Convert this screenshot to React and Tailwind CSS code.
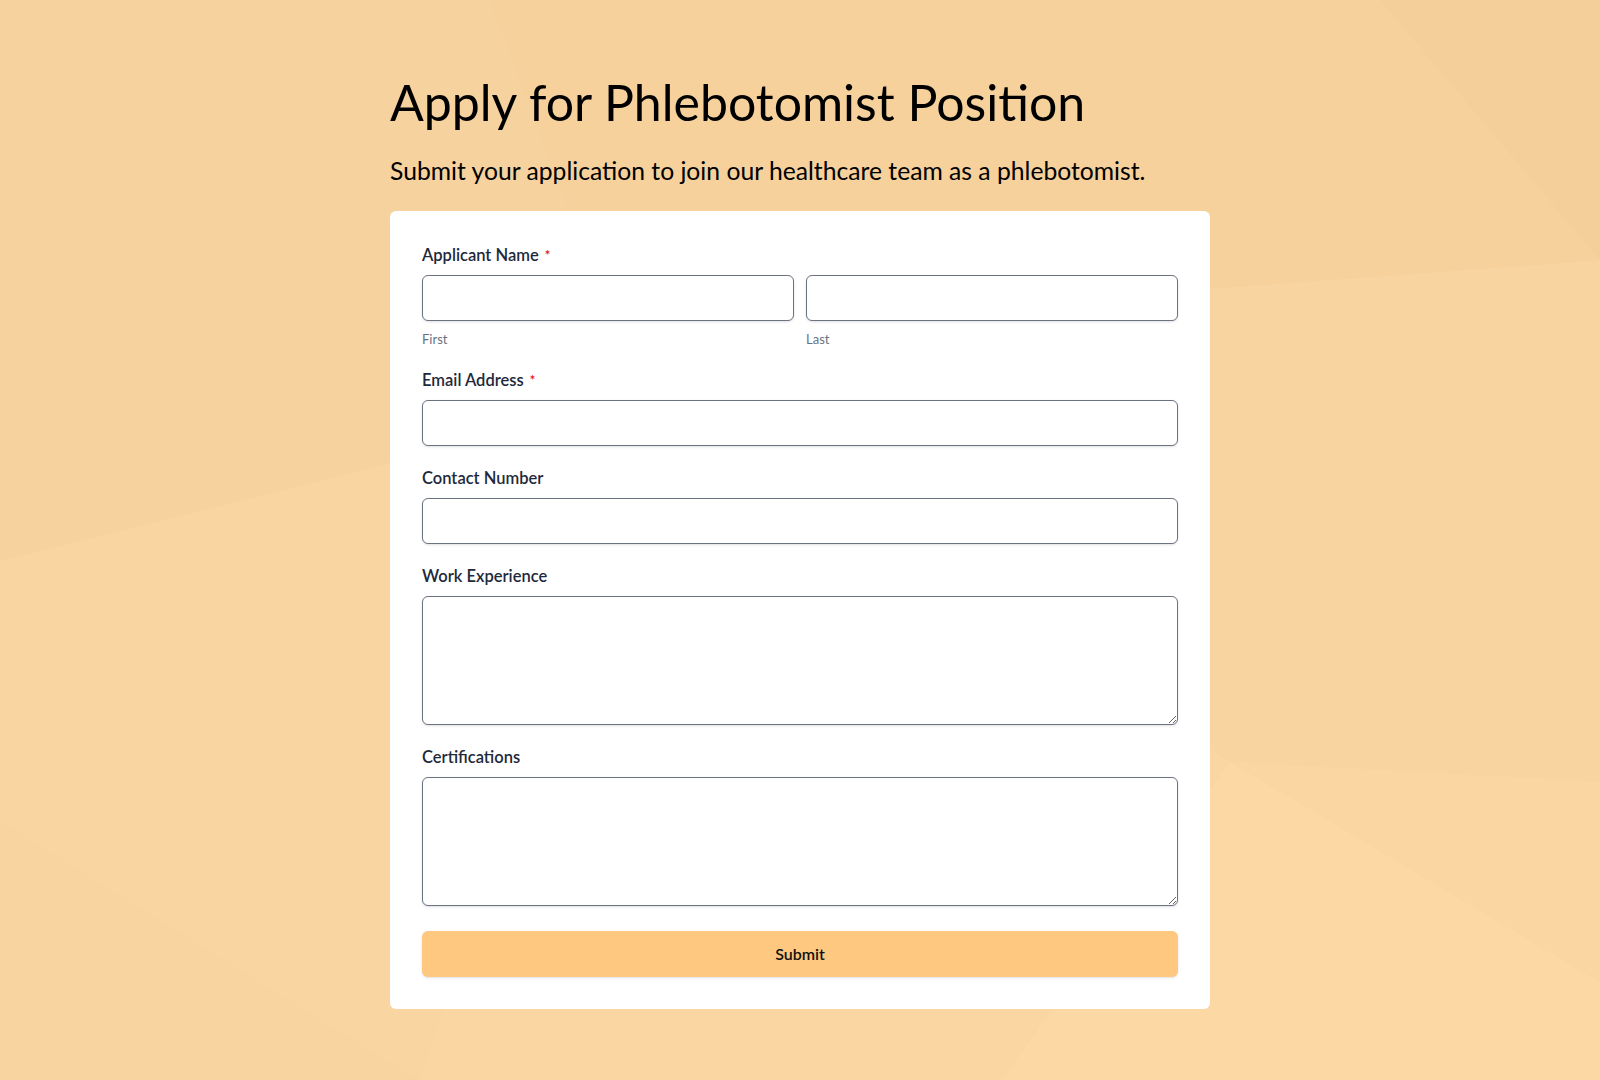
import { useState } from 'react'

function Label({ children, required }) {
  return (
    <label className="flex items-center text-[16.5px] font-semibold leading-6 text-[#1e293b] mb-2">
      {children}
      {required && <span className="ml-1.5 text-[13px] leading-none text-red-600">*</span>}
    </label>
  )
}

const inputCls =
  'block w-full h-[46px] px-3 rounded-md border border-[#6b7280] bg-white text-base text-slate-800 shadow-sm outline-none focus:border-amber-500'

const areaCls =
  'block w-full h-[129px] px-3 py-2 rounded-md border border-[#6b7280] bg-white text-base text-slate-800 shadow-sm outline-none focus:border-amber-500'

function Backdrop() {
  return (
    <svg
      className="absolute inset-0 w-full h-full"
      viewBox="0 0 1600 1080"
      preserveAspectRatio="none"
    >
      <polygon points="0,0 490,0 640,400 0,560" fill="#f6d29e" />
      <polygon points="490,0 1600,0 1600,260 1050,300 640,400" fill="#f6d19c" />
      <polygon points="0,560 640,400 420,1080 0,1080" fill="#f8d5a1" />
      <polygon points="640,400 1050,300 1600,260 1600,780 1230,760" fill="#f7d4a0" />
      <polygon points="640,400 1230,760 1000,1080 420,1080" fill="#f9d6a2" />
      <polygon points="1230,760 1600,980 1600,1080 1000,1080" fill="#fbd8a4" />
      <polygon points="1230,760 1600,780 1600,980" fill="#f9d6a2" />
      <polygon points="1600,0 1600,260 1380,0" fill="#f5cf9a" />
      <polygon points="0,820 420,1080 0,1080" fill="#f7d4a0" />
    </svg>
  )
}

export default function App() {
  const [form, setForm] = useState({ first: '', last: '', email: '', phone: '', exp: '', cert: '' })
  const set = (k) => (e) => setForm({ ...form, [k]: e.target.value })

  return (
    <div className="relative min-h-screen bg-[#f7d39f] font-['Lato',sans-serif] overflow-hidden">
      <Backdrop />
      <div className="relative w-[820px] mx-auto pt-[72px] pb-[73px]">
        <h1 className="text-[50px] leading-[60px] text-black">Apply for Phlebotomist Position</h1>
        <p className="mt-[23px] text-[24.7px] leading-8 text-black">
          Submit your application to join our healthcare team as a phlebotomist.
        </p>

        <form
          className="mt-[24px] bg-white rounded-md p-8"
          onSubmit={(e) => e.preventDefault()}
        >
          <div>
            <Label required>Applicant Name</Label>
            <div className="grid grid-cols-2 gap-3">
              <div>
                <input className={inputCls} value={form.first} onChange={set('first')} />
                <div className="mt-2.5 text-[13px] leading-4 text-gray-500">First</div>
              </div>
              <div>
                <input className={inputCls} value={form.last} onChange={set('last')} />
                <div className="mt-2.5 text-[13px] leading-4 text-gray-500">Last</div>
              </div>
            </div>
          </div>

          <div className="mt-[21px]">
            <Label required>Email Address</Label>
            <input type="email" className={inputCls} value={form.email} onChange={set('email')} />
          </div>

          <div className="mt-5">
            <Label>Contact Number</Label>
            <input type="tel" className={inputCls} value={form.phone} onChange={set('phone')} />
          </div>

          <div className="mt-5">
            <Label>Work Experience</Label>
            <textarea className={areaCls} value={form.exp} onChange={set('exp')} />
          </div>

          <div className="mt-5">
            <Label>Certifications</Label>
            <textarea className={areaCls} value={form.cert} onChange={set('cert')} />
          </div>

          <button
            type="submit"
            className="mt-[25px] w-full h-[46px] rounded-md bg-[#fec880] text-base font-semibold text-[#111] shadow-sm"
          >
            Submit
          </button>
        </form>
      </div>
    </div>
  )
}
